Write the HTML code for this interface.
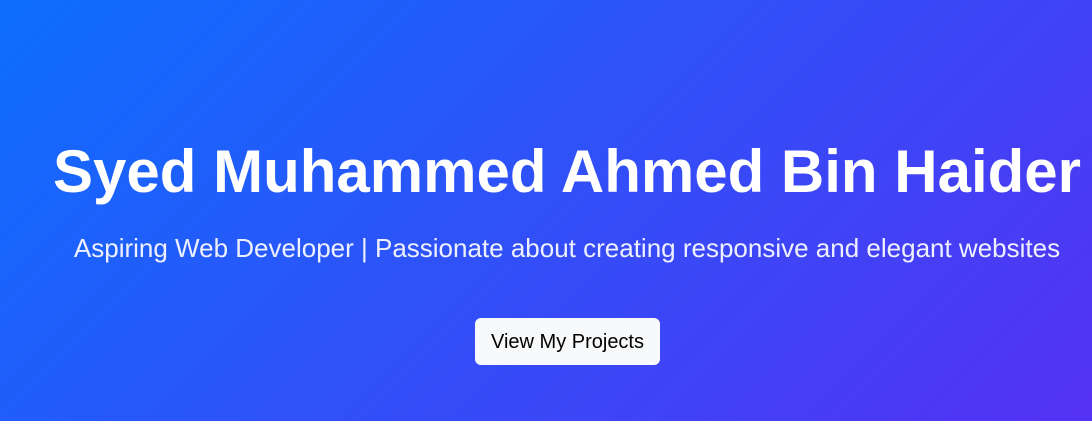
<!DOCTYPE html>
<html><head><style>
html,body{margin:0;width:1092px;height:421px;overflow:hidden}
body{background:linear-gradient(135deg,#0d6efd 0%,#6a1ff0 130%);font-family:"Liberation Sans",Arial,sans-serif;color:#fff;position:relative}
h1{position:absolute;left:0;width:1134px;top:139px;margin:0;text-align:center;font-size:60px;font-weight:bold;line-height:66px;white-space:nowrap}
p{position:absolute;left:0;width:1134px;top:232px;margin:0;text-align:center;font-size:26px;line-height:32px;color:#eef0ff;white-space:nowrap}
.btn{position:absolute;left:475px;top:318px;width:185px;height:47px;background:#f8f9fa;border-radius:6px;color:#000;font-size:20px;line-height:49px;text-align:center}
</style></head><body>
<h1>Syed Muhammed Ahmed Bin Haider</h1>
<p>Aspiring Web Developer | Passionate about creating responsive and elegant websites</p>
<div class="btn">View My Projects</div>
</body></html>
